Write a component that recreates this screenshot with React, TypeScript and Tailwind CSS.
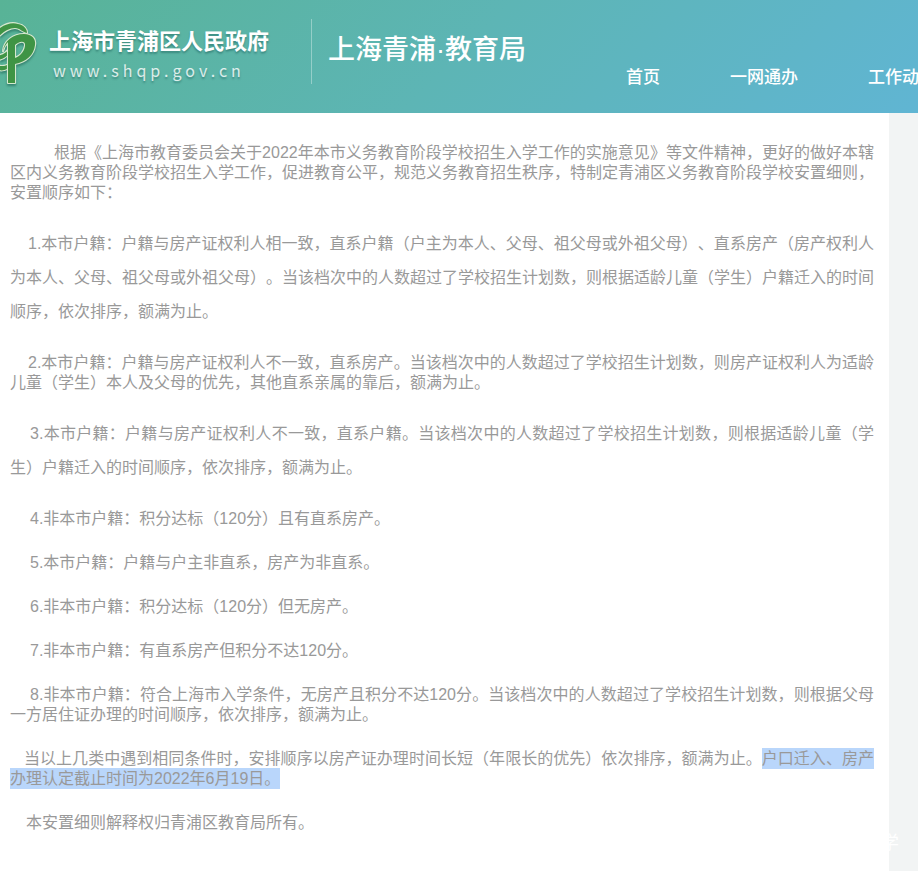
import clsx from 'clsx';

const navItems = ['首页', '一网通办', '工作动态'];

type Rule = { text: string; marked?: string; indent: string; loose?: boolean };

const rules: Rule[] = [
  {
    indent: 'indent-11',
    text: '根据《上海市教育委员会关于2022年本市义务教育阶段学校招生入学工作的实施意见》等文件精神，更好的做好本辖区内义务教育阶段学校招生入学工作，促进教育公平，规范义务教育招生秩序，特制定青浦区义务教育阶段学校安置细则，安置顺序如下：',
  },
  {
    indent: 'indent-[18px]',
    loose: true,
    text: '1.本市户籍：户籍与房产证权利人相一致，直系户籍（户主为本人、父母、祖父母或外祖父母）、直系房产（房产权利人为本人、父母、祖父母或外祖父母）。当该档次中的人数超过了学校招生计划数，则根据适龄儿童（学生）户籍迁入的时间顺序，依次排序，额满为止。',
  },
  {
    indent: 'indent-[18px]',
    text: '2.本市户籍：户籍与房产证权利人不一致，直系房产。当该档次中的人数超过了学校招生计划数，则房产证权利人为适龄儿童（学生）本人及父母的优先，其他直系亲属的靠后，额满为止。',
  },
  {
    indent: 'indent-5',
    loose: true,
    text: '3.本市户籍：户籍与房产证权利人不一致，直系户籍。当该档次中的人数超过了学校招生计划数，则根据适龄儿童（学生）户籍迁入的时间顺序，依次排序，额满为止。',
  },
  { indent: 'indent-5', text: '4.非本市户籍：积分达标（120分）且有直系房产。' },
  { indent: 'indent-5', text: '5.本市户籍：户籍与户主非直系，房产为非直系。' },
  { indent: 'indent-5', text: '6.非本市户籍：积分达标（120分）但无房产。' },
  { indent: 'indent-5', text: '7.非本市户籍：有直系房产但积分不达120分。' },
  {
    indent: 'indent-5',
    text: '8.非本市户籍：符合上海市入学条件，无房产且积分不达120分。当该档次中的人数超过了学校招生计划数，则根据父母一方居住证办理的时间顺序，依次排序，额满为止。',
  },
  {
    indent: 'indent-[14px]',
    text: '当以上几类中遇到相同条件时，安排顺序以房产证办理时间长短（年限长的优先）依次排序，额满为止。',
    marked: '户口迁入、房产办理认定截止时间为2022年6月19日。',
  },
  { indent: 'indent-4', text: '本安置细则解释权归青浦区教育局所有。' },
];

const logoShapes = [
  'M-4 10 C4 3 12 1 18 3 C24 4 27 8 27 12 C22 11 20 7 15 7 C8 7 2 12 -4 18 Z',
  'M-4 35 C3 34 6 32 9 28 V33 C5 37 1 39 -4 39 Z',
  'M-4 44 C2 46 6 45 9 43 V47 C4 50 0 50 -4 48 Z',
  'M3 30 C4 20 13 13 24 13 C32 13 36 18 35 24 C34 34 26 41 15 43 V62 H8 V21 C6 23 4 26 3 30 Z M15 24 C19 20 26 19 25 25 C24 31 20 35 15 37 Z',
];

function Logo() {
  return (
    <svg viewBox="0 -1 38 66" className="h-[66px] w-[38px] shrink-0 drop-shadow-[0_2px_1px_rgba(0,60,50,0.4)]" aria-hidden="true">
      <g fill="#3f9445" fillRule="evenodd" stroke="#d5e8cf" strokeWidth="2.2" strokeLinejoin="round" paintOrder="stroke">
        {logoShapes.map((shape) => (
          <path key={shape} d={shape} />
        ))}
      </g>
    </svg>
  );
}

export default function App() {
  return (
    <div className="min-h-screen overflow-x-hidden bg-[#f2f4f4] font-['Liberation_Sans','Noto_Sans_CJK_SC',sans-serif]" lang="zh-CN">
      <header className="flex h-[113px] overflow-hidden bg-linear-[135deg,#58b396,#5db5b5_50%,#60b5d3] whitespace-nowrap text-white">
        <div className="flex shrink-0 items-start pt-5">
          <Logo />
          <div className="ml-[11px] pt-2 text-shadow-[0_2px_2px_rgba(0,60,60,0.35)]">
            <p className="text-[22px] leading-7 font-bold">上海市青浦区人民政府</p>
            <p className="pl-1 font-['Noto_Sans_CJK_SC',sans-serif] text-base leading-7 tracking-[4px] text-white/80">www.shqp.gov.cn</p>
          </div>
        </div>
        <h1 className="mt-[19px] ml-[42px] h-[65px] shrink-0 border-l border-white/35 pl-4 text-[27px] leading-[63px] font-medium">上海青浦·教育局</h1>
        <nav className="ml-[100px] flex shrink-0 gap-[70px] pt-[66px] text-[17px] leading-6 font-medium">
          {navItems.map((item) => (
            <a key={item} href="#">
              {item}
            </a>
          ))}
        </nav>
      </header>

      <div className="flex">
        <main className="min-h-[758px] min-w-0 flex-1 bg-white pt-[30px] pr-[15px] pl-[10px] text-justify text-base text-[#999] [text-spacing-trim:space-all]">
          {rules.map((rule) => (
            <p key={rule.text} className={clsx('mb-6', rule.indent, rule.loose ? 'leading-[34px]' : 'leading-5')}>
              {rule.text}
              {rule.marked && <mark className="bg-[#b9d6fb] py-0.5 text-inherit">{rule.marked}</mark>}
            </p>
          ))}
        </main>
        <aside className="flex w-[29px] shrink-0 flex-col justify-end overflow-hidden pb-4 text-white">
          <span className="-ml-2 text-lg leading-6">学</span>
        </aside>
      </div>
    </div>
  );
}
